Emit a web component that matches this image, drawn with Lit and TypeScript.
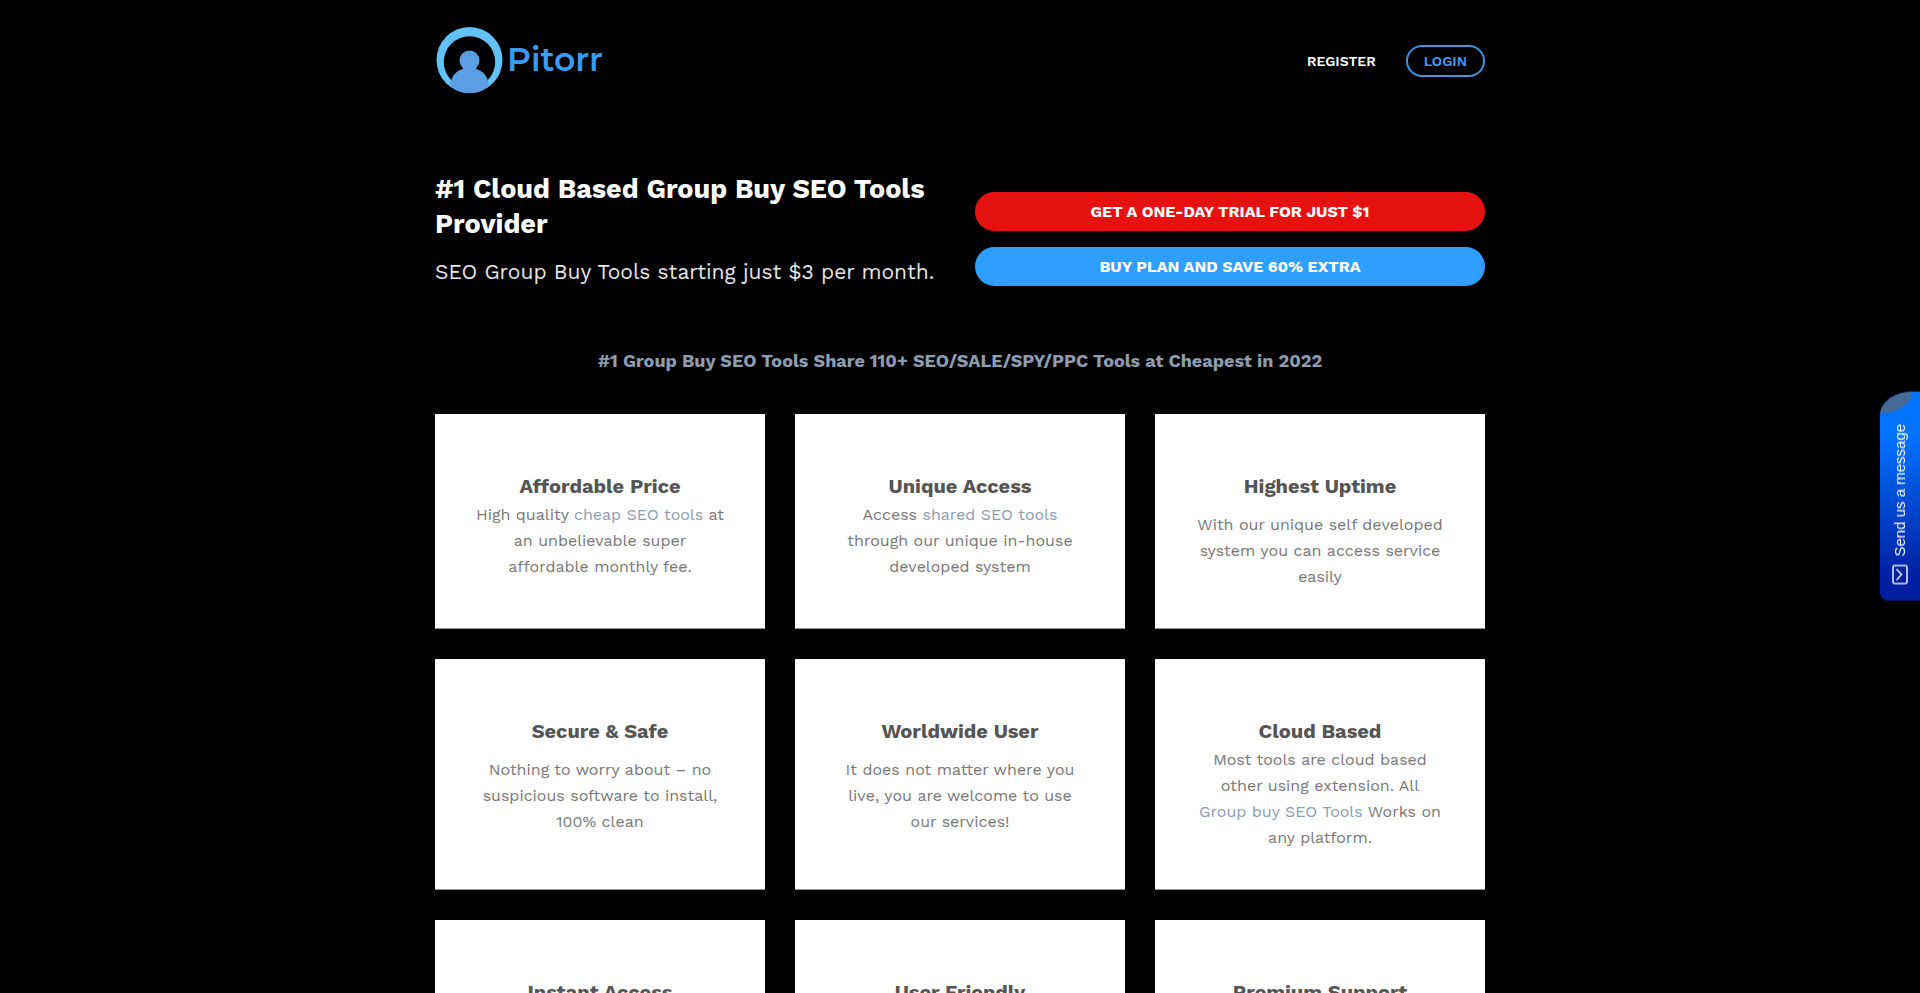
import { LitElement, html, css, TemplateResult } from "lit";
import { customElement, property } from "lit/decorators.js";

interface Feature {
  title: string;
  body: TemplateResult;
  compact?: boolean;
}

const FEATURES: Feature[] = [
  { title: "Affordable Price", compact: true, body: html`High quality <a href="#">cheap SEO tools</a> at an unbelievable super affordable monthly fee.` },
  { title: "Unique Access", compact: true, body: html`Access <a href="#">shared SEO tools</a> through our unique in-house developed system` },
  { title: "Highest Uptime", body: html`With our unique self developed system you can access service easily` },
  { title: "Secure & Safe", body: html`Nothing to worry about – no suspicious software to install, 100% clean` },
  { title: "Worldwide User", body: html`It does not matter where you live, you are welcome to use our services!` },
  { title: "Cloud Based", compact: true, body: html`Most tools are cloud based other using extension. All <a href="#">Group buy SEO Tools</a> Works on any platform.` },
  { title: "Instant Access", body: html`` },
  { title: "User Friendly", body: html`` },
  { title: "Premium Support", body: html`` },
];

@customElement("feature-card")
export class FeatureCard extends LitElement {
  @property({ attribute: false }) feature!: Feature;

  static styles = css`
    :host {
      display: block;
      box-sizing: border-box;
      padding: 56px 40px 38px;
      background: #fff;
      border-bottom: 1px solid #999;
      text-align: center;
    }
    .title {
      margin: 0;
      font-size: 20px;
      line-height: 32px;
      font-weight: 700;
      color: #555;
    }
    .body {
      margin: 10px 0 0;
      font-size: 16px;
      line-height: 26px;
      color: #777;
    }
    .compact {
      margin-top: 0;
    }
    a {
      color: #8c9cb0;
      text-decoration: none;
      white-space: nowrap;
    }
  `;

  render() {
    const { title, body, compact } = this.feature;
    return html`<h3 class="title">${title}</h3>
      <p class="body ${compact ? "compact" : ""}">${body}</p>`;
  }
}

@customElement("app-root")
export class AppRoot extends LitElement {
  static styles = css`
    :host {
      display: block;
      height: 100vh;
      overflow: hidden;
      background: #000;
      color: #fff;
      font-family: "Work Sans", Inter, sans-serif;
    }
    .container {
      max-width: 1050px;
      margin: 0 auto;
    }
    .header {
      display: flex;
      justify-content: space-between;
      align-items: center;
      height: 120px;
    }
    .brand {
      display: flex;
      align-items: center;
      gap: 4px;
      color: #3a9bf2;
      font-family: Montserrat, Inter, sans-serif;
      font-size: 33px;
      line-height: 40px;
      font-weight: 600;
      text-decoration: none;
    }
    .name {
      padding-bottom: 2px;
    }
    .mark {
      width: 68px;
      height: 68px;
    }
    .nav {
      display: flex;
      align-items: center;
      gap: 30px;
      padding-top: 2px;
      font-size: 14px;
      font-weight: 600;
    }
    .nav a {
      color: #fff;
      text-decoration: none;
    }
    .nav .login {
      padding: 0 16px;
      border: 2px solid #3f95de;
      border-radius: 16px;
      line-height: 28px;
      color: #3f9cf0;
    }
    .hero {
      display: grid;
      grid-template-columns: 1fr 1fr;
      gap: 30px;
      align-items: end;
      padding: 52px 0;
    }
    .headline {
      margin: 0;
      font-size: 27px;
      line-height: 35px;
      font-weight: 700;
    }
    .tagline {
      margin: 16px 0 0;
      font-size: 21px;
      line-height: 28px;
      font-weight: 400;
      color: #e6e6e6;
    }
    .actions {
      display: grid;
      gap: 16px;
    }
    .cta {
      border-radius: 20px;
      background: #2e9eff;
      color: #fff;
      font-size: 16px;
      line-height: 39px;
      font-weight: 700;
      text-align: center;
      text-decoration: none;
    }
    .trial {
      background: #e61212;
    }
    .intro {
      margin: 0;
      padding: 10px 0 40px;
      font-size: 18px;
      line-height: 26px;
      font-weight: 700;
      text-align: center;
      color: #8d9caf;
    }
    .cards {
      display: grid;
      grid-template-columns: repeat(3, 1fr);
      gap: 30px;
    }
    .message {
      position: fixed;
      right: 0;
      top: 392px;
      display: flex;
      align-items: center;
      gap: 8px;
      width: 40px;
      padding: 16px 0 32px;
      border: 0;
      border-radius: 0 8px 32px 0 / 0 8px 24px 0;
      overflow: hidden;
      writing-mode: vertical-rl;
      transform: rotate(180deg);
      background: linear-gradient(to top, #0074ff 20%, #001ea0 90%);
      color: #fff;
      font: 15px "Liberation Sans", Arial, sans-serif;
    }
    .message::before {
      content: "";
      position: absolute;
      right: 0;
      bottom: 0;
      width: 32px;
      height: 22px;
      border-radius: 32px 0 32px 0 / 22px 0 22px 0;
      background: #456a99;
    }
    .envelope {
      width: 16px;
      height: 20px;
      transform: rotate(180deg);
    }
  `;

  render() {
    return html`
      <div class="container">
        <header class="header">
          <a class="brand" href="#">
            <svg class="mark" viewBox="0 0 68 68" aria-hidden="true">
              <defs><clipPath id="disc"><circle cx="34.5" cy="34" r="33" /></clipPath></defs>
              <circle cx="34.5" cy="34" r="33" fill="#62c1f6" />
              <circle cx="34.5" cy="36" r="25.7" fill="#000" />
              <g fill="#5b9fe3" clip-path="url(#disc)">
                <circle cx="34.5" cy="34.5" r="10" />
                <path d="M28 40h13v5H28z" />
                <path d="M15 60C16 48 24 42 34.5 42S53 48 54 60V68H15z" />
              </g>
            </svg>
            <span class="name">Pitorr</span>
          </a>
          <nav class="nav">
            <a href="#">REGISTER</a>
            <a class="login" href="#">LOGIN</a>
          </nav>
        </header>
        <main>
          <section class="hero">
            <div>
              <h1 class="headline">#1 Cloud Based Group Buy SEO Tools Provider</h1>
              <p class="tagline">SEO Group Buy Tools starting just $3 per month.</p>
            </div>
            <div class="actions">
              <a class="cta trial" href="#">GET A ONE-DAY TRIAL FOR JUST $1</a>
              <a class="cta" href="#">BUY PLAN AND SAVE 60% EXTRA</a>
            </div>
          </section>
          <h2 class="intro">#1 Group Buy SEO Tools Share 110+ SEO/SALE/SPY/PPC Tools at Cheapest in 2022</h2>
          <section class="cards">
            ${FEATURES.map((f) => html`<feature-card .feature=${f}></feature-card>`)}
          </section>
        </main>
      </div>
      <button class="message" type="button">
        <svg class="envelope" viewBox="0 0 16 20" fill="none" stroke="#dfe6ff" stroke-width="1.6" aria-hidden="true">
          <rect x="1" y="1" width="14" height="18" rx="2" />
          <path d="M4.500 4.500l5 5.500-5 5.500" />
        </svg>
        <span>Send us a message</span>
      </button>
    `;
  }
}
